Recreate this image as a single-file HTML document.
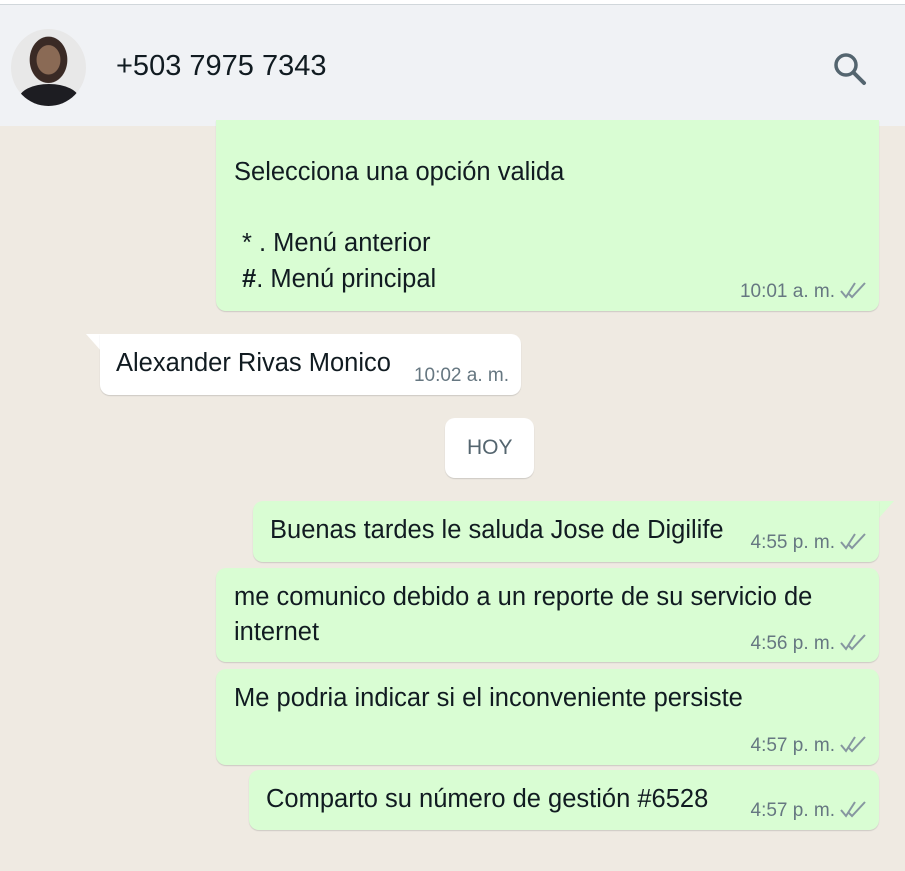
<!DOCTYPE html>
<html><head><meta charset="utf-8"><style>
*{margin:0;padding:0;box-sizing:border-box}
body{width:905px;height:871px;overflow:hidden;background:#efeae2;font-family:"Liberation Sans",sans-serif;color:#111b21;position:relative}
.hdr{position:absolute;left:0;top:0;width:905px;height:126px;background:#f0f2f5;border-top:4px solid #fff;}
.hdr:before{content:"";position:absolute;left:0;top:0;width:905px;height:1px;background:#d1d7db}
.av{position:absolute;left:11px;top:25px;width:75px;height:77px;border-radius:50%;background:radial-gradient(ellipse at 50% 40%,#8a6a55 0 22%,#3a2a25 23% 35%,#e8e8e8 36%);overflow:hidden}
.av:after{content:"";position:absolute;left:8px;top:55px;width:60px;height:30px;border-radius:50% 50% 0 0;background:#1d1d22}
.name{position:absolute;left:116px;top:46px;font-size:29px}
.b{position:absolute;border-radius:10px;box-shadow:0 1px 1px rgba(11,20,26,.15);font-size:25.5px;line-height:30px}
.g{background:#d9fdd3}.w{background:#fff}
.t{position:absolute;right:12px;font-size:19px;line-height:22px;color:#667781;white-space:nowrap}
.tk{display:inline-block;vertical-align:middle;margin-left:4px;margin-top:-3px}
p{position:absolute;white-space:nowrap}
</style></head><body>
<div class="hdr">
<div class="av"></div>
<div class="name">+503 7975 7343</div>
<svg style="position:absolute;left:832px;top:47px" width="36" height="36" viewBox="0 0 36 36"><circle cx="14" cy="14" r="10" fill="none" stroke="#54656f" stroke-width="3.5"/><line x1="21.5" y1="21.5" x2="32" y2="32" stroke="#54656f" stroke-width="4" stroke-linecap="round"/></svg>
</div>
<div class="b g" style="left:216px;top:120px;width:663px;height:191px;border-radius:0 0 10px 10px">
<p style="left:18px;top:37px">Selecciona una opción valida</p>
<p style="left:26px;top:108px">* . Menú anterior</p>
<p style="left:26px;top:144px"><b>#</b>. Menú principal</p>
<div class="t" style="top:161px">10:01 a. m.<svg class="tk" width="28" height="18" viewBox="0 0 28 18"><path d="M2 10l5 6L16 2M10 13l3 3L26 2" fill="none" stroke="#8696a0" stroke-width="2"/></svg></div>
</div>
<svg style="position:absolute;left:86px;top:334px" width="20" height="20"><path d="M0 0H16V18Z" fill="#fff"/></svg>
<div class="b w" style="left:100px;top:334px;width:421px;height:61px;border-top-left-radius:0">
<p style="left:16px;top:14px">Alexander Rivas Monico</p>
<div class="t" style="top:31px">10:02 a. m.</div>
</div>
<div class="b w" style="left:445px;top:418px;width:89px;height:60px;font-size:21px;color:#54656f"><p style="left:22px;top:15px">HOY</p></div>
<svg style="position:absolute;left:872px;top:501px" width="22" height="20"><path d="M0 0H22L6 18Z" fill="#d9fdd3"/></svg>
<div class="b g" style="left:253px;top:501px;width:626px;height:61px;border-top-right-radius:0">
<p style="left:17px;top:14px">Buenas tardes le saluda Jose de Digilife</p>
<div class="t" style="top:31px">4:55 p. m.<svg class="tk" width="28" height="18" viewBox="0 0 28 18"><path d="M2 10l5 6L16 2M10 13l3 3L26 2" fill="none" stroke="#8696a0" stroke-width="2"/></svg></div>
</div>
<div class="b g" style="left:216px;top:568px;width:663px;height:94px">
<p style="left:18px;top:14px">me comunico debido a un reporte de su servicio de</p>
<p style="left:18px;top:49px">internet</p>
<div class="t" style="top:65px">4:56 p. m.<svg class="tk" width="28" height="18" viewBox="0 0 28 18"><path d="M2 10l5 6L16 2M10 13l3 3L26 2" fill="none" stroke="#8696a0" stroke-width="2"/></svg></div>
</div>
<div class="b g" style="left:216px;top:669px;width:663px;height:96px">
<p style="left:18px;top:14px">Me podria indicar si el inconveniente persiste</p>
<div class="t" style="top:66px">4:57 p. m.<svg class="tk" width="28" height="18" viewBox="0 0 28 18"><path d="M2 10l5 6L16 2M10 13l3 3L26 2" fill="none" stroke="#8696a0" stroke-width="2"/></svg></div>
</div>
<div class="b g" style="left:249px;top:770px;width:630px;height:60px">
<p style="left:17px;top:14px">Comparto su número de gestión #6528</p>
<div class="t" style="top:30px">4:57 p. m.<svg class="tk" width="28" height="18" viewBox="0 0 28 18"><path d="M2 10l5 6L16 2M10 13l3 3L26 2" fill="none" stroke="#8696a0" stroke-width="2"/></svg></div>
</div>
</body></html>
